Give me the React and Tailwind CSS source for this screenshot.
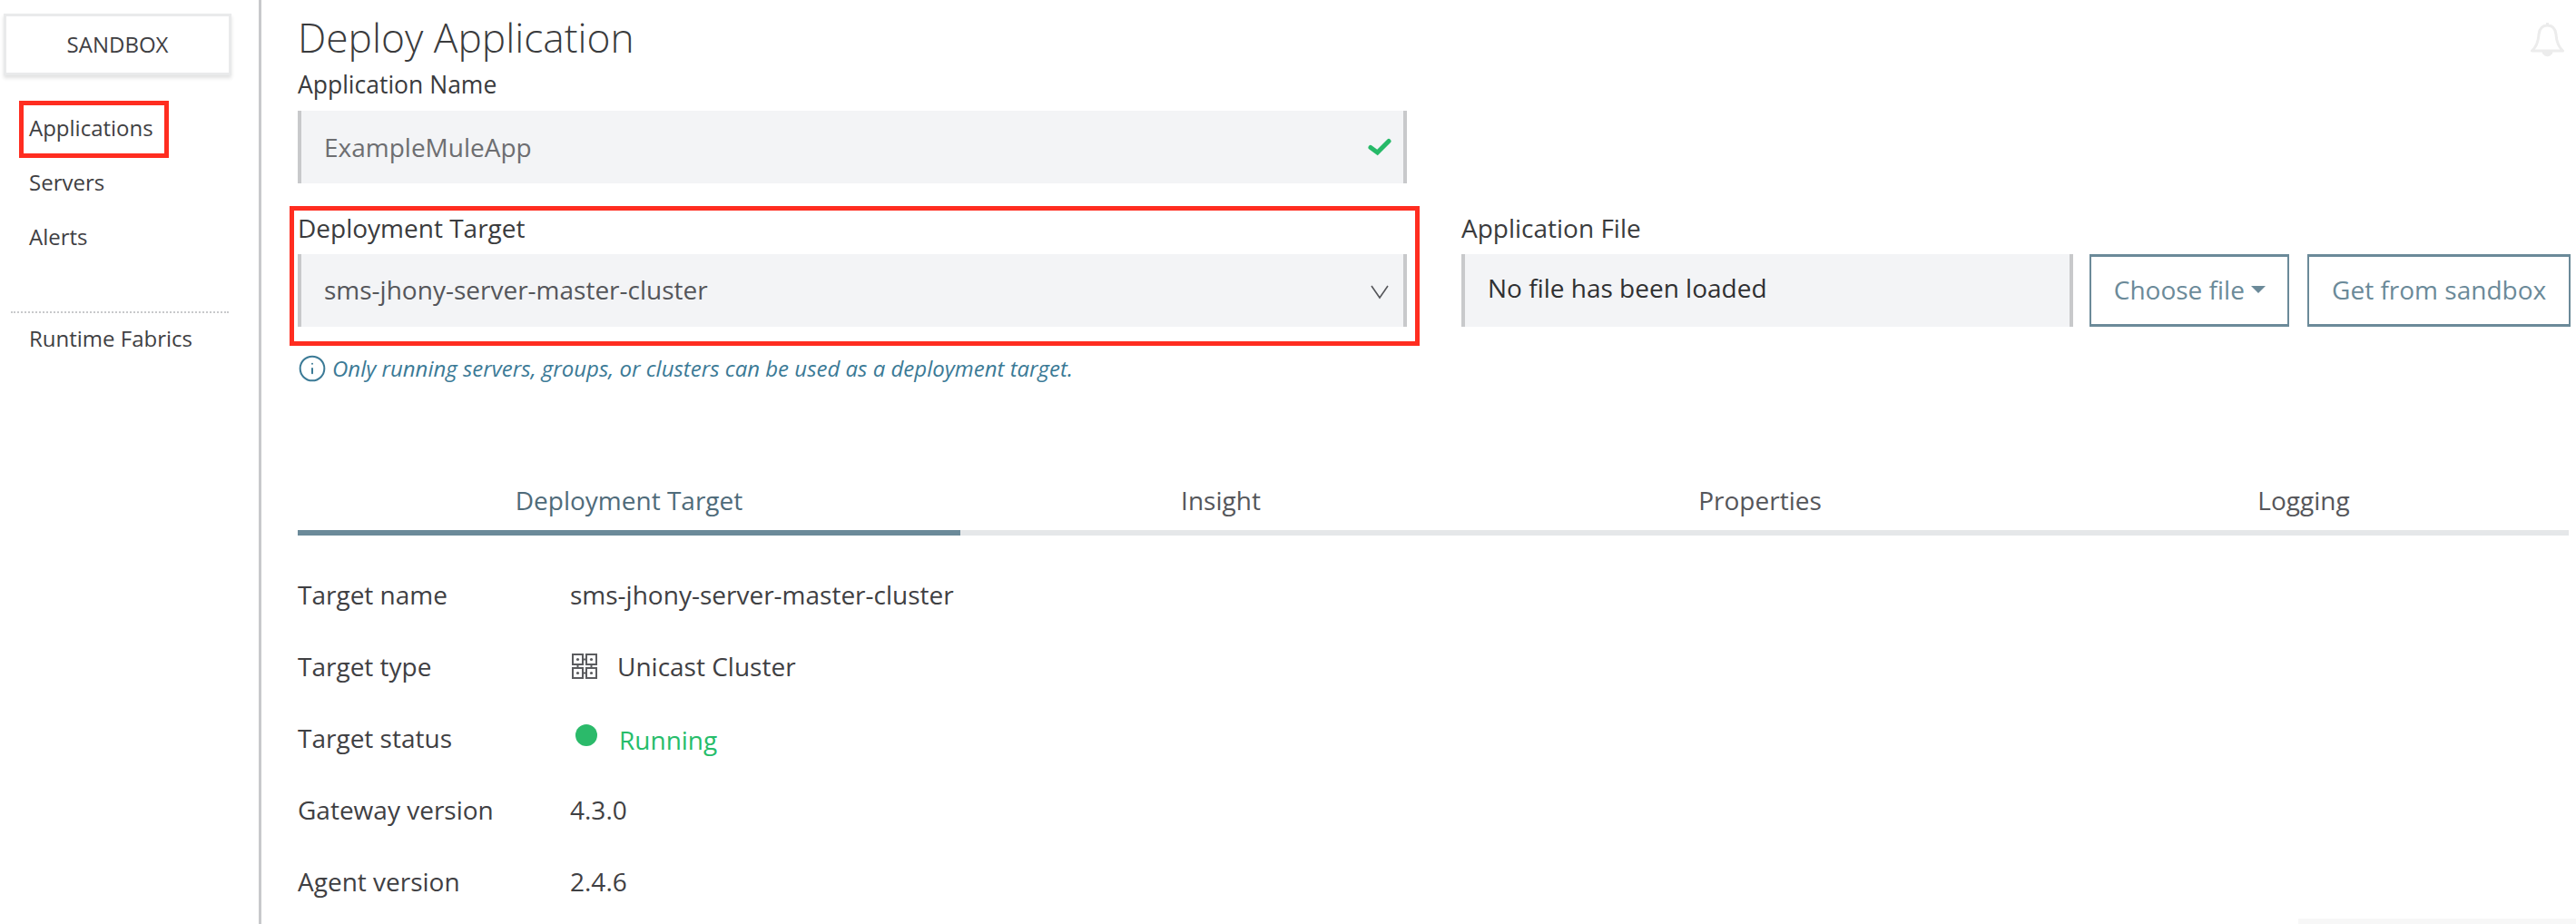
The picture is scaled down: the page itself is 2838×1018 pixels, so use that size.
import { Info } from "lucide-react";

const NAV = ["Applications", "Servers", "Alerts"];

const TABS = [
  { label: "Deployment Target", width: "w-[730px]", active: true },
  { label: "Insight", width: "w-[574px]" },
  { label: "Properties", width: "w-[614px]" },
  { label: "Logging", width: "w-[584px]" },
];

function ClusterIcon() {
  return (
    <svg width="28" height="28" viewBox="0 0 28 28" fill="none" stroke="#5b5c5f" strokeWidth="2">
      <rect x="1" y="1" width="11" height="11" />
      <rect x="16" y="1" width="11" height="11" />
      <rect x="1" y="16" width="11" height="11" />
      <rect x="16" y="16" width="11" height="11" />
      <path d="M12 6.5h4M6.5 12v4M21.5 12v4M12 21.5h4" />
      <circle cx="6.5" cy="6.5" r="1.6" fill="#5b5c5f" stroke="none" />
      <circle cx="21.5" cy="6.5" r="1.6" fill="#5b5c5f" stroke="none" />
      <circle cx="6.5" cy="21.5" r="1.6" fill="#5b5c5f" stroke="none" />
      <circle cx="21.5" cy="21.5" r="1.6" fill="#5b5c5f" stroke="none" />
    </svg>
  );
}

function BellIcon() {
  return (
    <svg width="37" height="39" viewBox="0 0 37 39" fill="none" stroke="#ececec" strokeWidth="3" strokeLinejoin="round" className="mr-[7px] mt-[5px]">
      <path d="M18.5 4 C12 4 9.5 9 9 14 C8.5 22 7 27 1.5 32 H35.5 C30 27 28.5 22 28 14 C27.5 9 25 4 18.5 4 Z" />
      <path d="M18.5 1 V4" />
      <path d="M13 33.5 C14 39 23 39 24 33.5 Z" fill="#ececec" strokeWidth="1" />
    </svg>
  );
}

function Field({ text, color, textOffset, children }) {
  return (
    <div className="flex h-[80px] items-center justify-between border-x-4 border-[#c8c9cb] bg-[#f3f4f6] pl-[25px] pr-[13px]">
      <span className={color + " " + textOffset}>{text}</span>
      {children}
    </div>
  );
}

function Row({ label, children }) {
  return (
    <div className="flex h-[79px] items-center">
      <div className="w-[300px]">{label}</div>
      <div className="flex items-center">{children}</div>
    </div>
  );
}

export default function App() {
  return (
    <div className="relative flex h-[1018px] overflow-hidden bg-white font-['Open_Sans',sans-serif] text-[28px] text-[#3f4043]">
      {/* Sidebar */}
      <div className="w-[288px] shrink-0 border-r-[3px] border-[#c8c9cb] pl-[4px] pt-[15px] text-[24px]">
        <div className="flex h-[68px] w-[251px] items-center justify-center border-[3px] border-[#e9eaeb] shadow-[0_3px_4px_rgba(0,0,0,0.12)]">
          SANDBOX
        </div>
        <div className="relative mt-[28px] pl-[28px]">
          {NAV.map((item) => (
            <div key={item} className="flex h-[60px] items-center">
              {item}
            </div>
          ))}
          <div className="absolute left-[17px] top-0 h-[63px] w-[165px] border-[5px] border-[#ff2d20]" />
        </div>
        <div className="ml-[8px] mt-[52px] w-[240px] border-t-2 border-dotted border-[#c8c9cb]" />
        <div className="mt-[8px] flex h-[40px] items-center pl-[28px]">Runtime Fabrics</div>
      </div>

      {/* Main */}
      <div className="min-w-0 flex-1 pl-[40px] pr-[6px]">
        <div className="flex h-[72px] items-center justify-between pt-[10px]">
          <h1 className="text-[44.3px] font-light leading-none text-[#3a3b3d]">Deploy Application</h1>
          <BellIcon />
        </div>

        <div className="flex h-[50px] items-center pb-[6px] text-[26.5px] text-[#3a3b3d]">Application Name</div>
        <div className="w-[1222px]">
          <Field text="ExampleMuleApp" color="text-[#6d6e71]">
            <svg width="26" height="20" viewBox="0 0 26 20" fill="none" stroke="#26b968" strokeWidth="5" strokeLinecap="round" strokeLinejoin="miter">
              <path d="M3 10.5 L10.5 16 L23 3.5" />
            </svg>
          </Field>
        </div>

        <div className="relative mt-[28px] flex gap-[60px]">
          <div className="w-[1222px]">
            <div className="flex h-[50px] items-center pb-[8px] text-[#3a3b3d]">Deployment Target</div>
            <Field text="sms-jhony-server-master-cluster" color="text-[#55565a]" textOffset="mb-[3px]">
              <svg width="20" height="16" viewBox="0 0 20 16" fill="none" stroke="#55565a" strokeWidth="1.6" className="mr-[3px] mt-[4px]">
                <path d="M1 1 L10 14 L19 1" />
              </svg>
            </Field>
          </div>
          <div className="min-w-0 flex-1">
            <div className="flex h-[50px] items-center pb-[8px] text-[#3a3b3d]">Application File</div>
            <div className="flex h-[80px] gap-[18px]">
              <div className="flex w-[675px] items-center border-x-4 border-[#c8c9cb] bg-[#f3f4f6] pb-[7px] pl-[25px] text-[#2f3032]">
                No file has been loaded
              </div>
              <button className="flex w-[220px] items-center justify-center gap-[7px] border-2 border-y-[3px] border-[#6b8a99] pb-[2px] text-[#6b8a99]">
                Choose file
                <span className="h-0 w-0 border-x-[8px] border-t-[8px] border-x-transparent border-t-[#6b8a99]" />
              </button>
              <button className="ml-[2px] w-[290px] border-2 border-y-[3px] border-[#6b8a99] pb-[2px] text-[#6b8a99]">
                Get from sandbox
              </button>
            </div>
          </div>
          <div className="absolute -top-[3px] -left-[9px] h-[154px] w-[1245px] border-[5px] border-[#ff2d20]" />
        </div>

        <div className="mt-[28px] flex items-center gap-[6px] text-[24px] italic text-[#3b7a96]">
          <Info size={32} strokeWidth={1.5} />
          Only running servers, groups, or clusters can be used as a deployment target.
        </div>

        {/* Tabs */}
        <div className="mt-[105px] flex">
          {TABS.map((tab) => (
            <div
              key={tab.label}
              className={
                tab.active
                  ? "flex h-[61px] items-start justify-center border-b-[6px] border-[#6b8a99] pt-[1px] text-[#4f6b7a] " + tab.width
                  : "flex h-[61px] items-start justify-center border-b-[6px] border-[#e5e7e9] pt-[1px] text-[#55565a] " + tab.width
              }
            >
              {tab.label}
            </div>
          ))}
        </div>

        <div className="mt-[25px]">
          <Row label="Target name">sms-jhony-server-master-cluster</Row>
          <Row label="Target type">
            <span className="ml-[2px] mr-[22px] flex">
              <ClusterIcon />
            </span>
            Unicast Cluster
          </Row>
          <Row label="Target status">
            <span className="mb-[6px] ml-[6px] mr-[24px] h-[24px] w-[24px] rounded-full bg-[#2bba6a]" />
            <span className="mt-[4px] text-[#26bd6a]">Running</span>
          </Row>
          <Row label="Gateway version">4.3.0</Row>
          <Row label="Agent version">2.4.6</Row>
        </div>
      </div>
      <div className="absolute bottom-0 right-0 h-[6px] w-[306px] bg-[#f7f7f7]" />
    </div>
  );
}
